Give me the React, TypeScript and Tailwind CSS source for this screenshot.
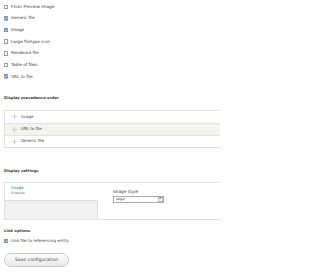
import React from "react";

const formatters = [
  { label: "Flickr Preview Image", checked: false },
  { label: "Generic file", checked: true },
  { label: "Image", checked: true },
  { label: "Large filetype icon", checked: false },
  { label: "Rendered file", checked: false },
  { label: "Table of files", checked: false },
  { label: "URL to file", checked: true },
];

const order = ["Image", "URL to file", "Generic file"];

function Checkbox({ checked }: { checked: boolean }) {
  if (!checked) {
    return <span className="block w-[4.5px] h-[4.5px] border-[0.5px] border-[#999] bg-white rounded-[0.5px] shrink-0" />;
  }
  return (
    <svg width="4.5" height="4.5" viewBox="0 0 9 9" className="shrink-0">
      <rect x="0.5" y="0.5" width="8" height="8" rx="1" fill="#6b93c9" stroke="#4a72a8" />
      <path d="M2 4.6 L3.8 6.4 L7.2 2.4" fill="none" stroke="#fff" strokeWidth="1.4" />
    </svg>
  );
}

function DragHandle() {
  return (
    <svg width="5" height="5" viewBox="0 0 10 10" className="shrink-0">
      <g fill="none" stroke="#aaa" strokeWidth="0.9">
        <path d="M5 1 V9 M1 5 H9" />
        <path d="M3.8 2.2 L5 1 L6.2 2.2 M3.8 7.8 L5 9 L6.2 7.8 M2.2 3.8 L1 5 L2.2 6.2 M7.8 3.8 L9 5 L7.8 6.2" />
      </g>
    </svg>
  );
}

export default function App() {
  return (
    <div className="w-[220px] h-[273px] overflow-hidden bg-white text-[#3b3b3b] font-['DejaVu_Sans',sans-serif]">
      {/* Formatter checkboxes */}
      <div className="pt-[1px] pl-[3.5px]">
        {formatters.map((f) => (
          <div key={f.label} className="h-[11.65px] flex items-center gap-[3px] text-[4.2px] leading-none">
            <Checkbox checked={f.checked} />
            <span>{f.label}</span>
          </div>
        ))}
      </div>

      {/* Precedence order */}
      <div className="mt-[12.5px] pl-[4px] h-[6px] text-[3.8px] leading-[6px] font-bold">Display precedence order</div>
      <div className="mt-[9px] ml-[4px] border-t border-b border-l border-[#e2e2de]">
        {order.map((item, i) => (
          <div
            key={item}
            className={
              "h-[12px] flex items-center text-[4px] leading-none " +
              (i > 0 ? "border-t border-[#e2e2de] " : "") +
              (i === 1 ? "bg-[#f3f4ee]" : "bg-white")
            }
          >
            <span className="w-[16px] flex justify-center pl-[2px]">
              <DragHandle />
            </span>
            <span>{item}</span>
          </div>
        ))}
      </div>

      {/* Display settings */}
      <div className="mt-[20px] pl-[4px] h-[6px] text-[3.8px] leading-[6px] font-bold">Display settings</div>
      <div className="mt-[8px] ml-[4px] h-[38px] border-t border-b border-l border-[#e2e2de] flex">
        <div className="w-[93px] flex flex-col">
          <div className="pt-[2.5px] pl-[6px] text-[4px] leading-[5px] text-[#0074bd]">Image</div>
          <div className="mt-[1px] pl-[6px] text-[3.4px] leading-[5px] text-[#777]">Enabled</div>
          <div className="mt-[3.5px] flex-1 bg-[#f1f1f1] border-t border-r border-[#dedede]" />
        </div>
        <div className="pl-[15px] pt-[6.5px]">
          <div className="text-[4.3px] leading-[5px]">Image style</div>
          <div className="mt-[1.5px] w-[51px] h-[7px] border-[0.5px] border-[#aaa] bg-white flex items-center justify-between">
            <span className="pl-[2px] text-[3.4px] leading-none">large</span>
            <span className="w-[4.5px] h-[5px] mr-[0.5px] border-[0.5px] border-[#bbb] bg-[#f4f4f4] flex items-center justify-center text-[2.5px] leading-none text-[#444]">
              ⬍
            </span>
          </div>
        </div>
      </div>

      {/* Link options */}
      <div className="mt-[8px] pl-[4px] h-[6px] text-[3.8px] leading-[6px] font-bold">Link options</div>
      <div className="mt-[4px] pl-[3.5px] h-[6px] flex items-center gap-[3px] text-[4px] leading-none">
        <Checkbox checked={true} />
        <span>Link file to referencing entity</span>
      </div>

      <div className="mt-[9.5px] pl-[4px]">
        <button className="w-[65px] h-[14px] rounded-full border-[0.5px] border-[#c8c8c8] bg-gradient-to-b from-[#fefefe] to-[#e9e9e9] text-[4.6px] leading-none text-[#444] flex items-center justify-center">
          Save configuration
        </button>
      </div>
    </div>
  );
}
